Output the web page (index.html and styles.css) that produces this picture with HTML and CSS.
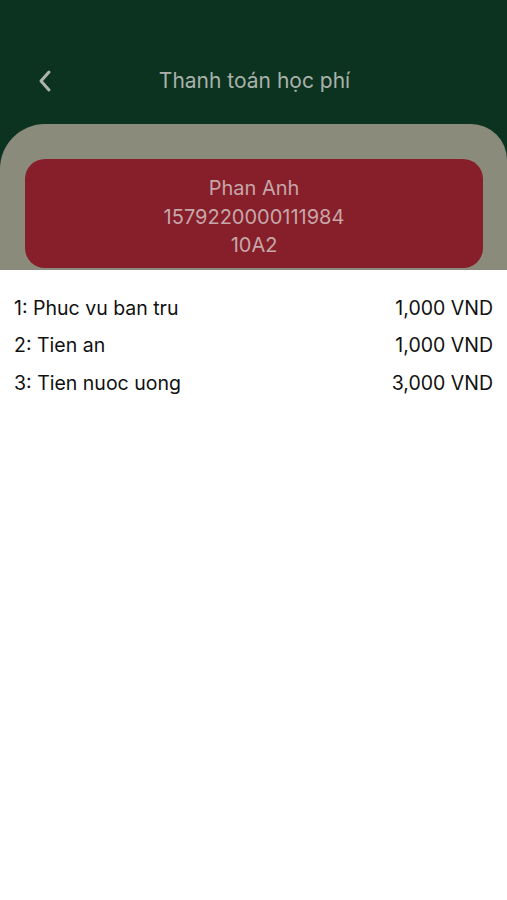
FILE: index.html
```html
<!DOCTYPE html>
<html lang="vi">
<head>
    <meta charset="UTF-8">
    <title>Thanh toán học phí</title>
    <link rel="stylesheet" href="styles.css">
</head>
<body>
<div class="top">
    <div class="nav-bar">
        <span class="back">
            <svg width="16" height="24" viewBox="0 0 16 24">
                <path d="M12 3 L4 12 L12 21" fill="none" stroke="#aeb4ae" stroke-width="3" stroke-linecap="round" stroke-linejoin="round"/>
            </svg>
        </span>
        <div class="title">Thanh toán học phí</div>
    </div>
    <div class="sheet">
        <div class="student">
            <div>Phan Anh</div>
            <div>1579220000111984</div>
            <div>10A2</div>
        </div>
    </div>
</div>
<ul class="fees">
    <li><span>1: Phuc vu ban tru</span><span>1,000 VND</span></li>
    <li><span>2: Tien an</span><span>1,000 VND</span></li>
    <li><span>3: Tien nuoc uong</span><span>3,000 VND</span></li>
</ul>
</body>
</html>
```

FILE: styles.css
```css
*{
    margin: 0;
    padding: 0;
    box-sizing: border-box;
}
body{
    background: #fff;
    font-family: Inter, "Liberation Sans", Arial, sans-serif;
}
li{
    list-style: none;
}
.top{
    height: 270px;
    background: #0c3320;
    overflow: hidden;
}
.nav-bar{
    position: relative;
    height: 124px;
    padding-top: 36px;
    display: flex;
    align-items: center;
    justify-content: center;
}
.nav-bar .back{
    position: absolute;
    left: 37px;
    top: 69px;
    width: 16px;
    height: 24px;
}
.nav-bar .back svg{
    display: block;
}
.nav-bar .title{
    color: #a9b1aa;
    font-size: 21px;
    margin-left: 2px;
}
.sheet{
    height: 146px;
    background: #8b8b7b;
    border-radius: 45px 36px 0 0;
    padding: 35px 24px 0 25px;
}
.student{
    height: 109px;
    background: #871f2b;
    border-radius: 20px;
    padding-top: 15px;
    color: #c6a6a8;
    font-size: 20px;
    line-height: 28.5px;
    text-align: center;
}
.fees{
    padding: 19px 14px 0 14px;
    color: #111;
    font-size: 19.5px;
}
.fees li{
    height: 37.5px;
    display: flex;
    align-items: center;
    justify-content: space-between;
}
```
